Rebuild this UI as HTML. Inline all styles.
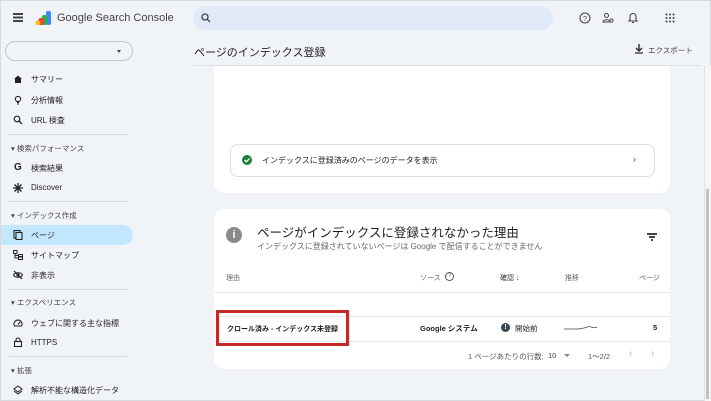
<!DOCTYPE html>
<html><head><meta charset="utf-8"><style>
*{box-sizing:border-box;margin:0;padding:0}
body{width:711px;height:401px;overflow:hidden;background:#f0f4f9;font-family:"Liberation Sans","Noto Sans CJK JP",sans-serif;color:#1f1f1f;position:relative;border:1px solid #d6d9dd}
.a{position:absolute;white-space:nowrap}
.side{font-size:8px;color:#1f1f1f}
.sec{font-size:7.5px;color:#444}
.hr{position:absolute;left:8px;width:118px;height:1px;background:#d3d6da}
svg.i{position:absolute;width:10px;height:10px}
</style></head><body>
<!-- header -->
<div class="a" style="left:12px;top:12px;width:10px;height:1.5px;background:#444;box-shadow:0 3.5px 0 #444,0 7px 0 #444"></div>
<svg class="a" style="left:34px;top:10px" width="17" height="14" viewBox="0 0 17 14"><rect x="11" y="0" width="5" height="14" rx="2" fill="#4285f4"/><rect x="7" y="4" width="5" height="10" rx="2" fill="#34a853"/><rect x="3.5" y="7" width="5" height="7" rx="2" fill="#ea4335"/><circle cx="3" cy="12" r="2.5" fill="#fbbc04"/></svg>
<div class="a" style="left:56px;top:11px;font-size:11px;color:#444">Google Search Console</div>
<div class="a" style="left:192px;top:5px;width:360px;height:24px;border-radius:12px;background:#e0e9f8"></div>
<svg class="a" style="left:200px;top:12px" width="10" height="10" viewBox="0 0 10 10"><circle cx="4" cy="4" r="3" fill="none" stroke="#444" stroke-width="1.3"/><path d="M6.2 6.2L9 9" stroke="#444" stroke-width="1.3"/></svg>
<svg class="a" style="left:578px;top:11px" width="12" height="12" viewBox="0 0 12 12"><circle cx="6" cy="6" r="5" fill="none" stroke="#444" stroke-width="1.1"/><text x="6" y="8.8" font-size="7.5" text-anchor="middle" fill="#444" font-family="Liberation Sans">?</text></svg>
<svg class="a" style="left:601px;top:11px" width="12" height="12" viewBox="0 0 12 12"><circle cx="4.5" cy="3.5" r="2" fill="none" stroke="#444" stroke-width="1"/><path d="M1 10c0-3 7-3 7 0z" fill="none" stroke="#444" stroke-width="1"/><circle cx="9.5" cy="8.5" r="1.6" fill="none" stroke="#444" stroke-width="1"/></svg>
<svg class="a" style="left:626px;top:10px" width="12" height="13" viewBox="0 0 12 13"><path d="M3 9V5.5a3 3 0 016 0V9l1 1H2z" fill="none" stroke="#444" stroke-width="1.1"/><path d="M5 11.5h2" stroke="#444" stroke-width="1.1"/></svg>
<svg class="a" style="left:664px;top:12px" width="10" height="10" viewBox="0 0 10 10" fill="#444"><circle cx="1.5" cy="1.5" r="1"/><circle cx="5" cy="1.5" r="1"/><circle cx="8.5" cy="1.5" r="1"/><circle cx="1.5" cy="5" r="1"/><circle cx="5" cy="5" r="1"/><circle cx="8.5" cy="5" r="1"/><circle cx="1.5" cy="8.5" r="1"/><circle cx="5" cy="8.5" r="1"/><circle cx="8.5" cy="8.5" r="1"/></svg>
<!-- sidebar -->
<div class="a" style="left:4px;top:40px;width:128px;height:20px;border:1px solid #c4c7c5;border-radius:10px"></div>
<div class="a" style="left:116px;top:49px;border:2.5px solid transparent;border-top:3px solid #444"></div>
<div class="a" style="left:0;top:224px;width:132px;height:20px;background:#c2e7ff;border-radius:0 10px 10px 0"></div>
<svg class="i" style="left:12px;top:73px" viewBox="0 0 10 10"><path d="M1 5L5 1.5 9 5H8v4H2V5z" fill="#222"/></svg>
<div class="a side" style="left:30px;top:73px">サマリー</div>
<svg class="i" style="left:12px;top:94px" viewBox="0 0 10 10"><circle cx="5" cy="4" r="2.6" fill="none" stroke="#222" stroke-width="1.1"/><path d="M4 7.5h2M4 9h2" stroke="#222" stroke-width="1"/></svg>
<div class="a side" style="left:30px;top:94px">分析情報</div>
<svg class="i" style="left:12px;top:114px" viewBox="0 0 10 10"><circle cx="4" cy="4" r="2.8" fill="none" stroke="#222" stroke-width="1.2"/><path d="M6 6L9 9" stroke="#222" stroke-width="1.3"/></svg>
<div class="a side" style="left:30px;top:114px">URL 検査</div>
<div class="hr" style="top:133px"></div>
<div class="a sec" style="left:10px;top:142px">▾ 検索パフォーマンス</div>
<div class="a side" style="left:13px;top:161px;font-weight:bold;font-size:10px">G</div>
<div class="a side" style="left:30px;top:162px">検索結果</div>
<svg class="i" style="left:12px;top:182px" viewBox="0 0 10 10"><path d="M5 0v10M0 5h10M1.5 1.5l7 7M8.5 1.5l-7 7" stroke="#222" stroke-width="1.3"/></svg>
<div class="a side" style="left:30px;top:182px">Discover</div>
<div class="hr" style="top:200px"></div>
<div class="a sec" style="left:10px;top:209px">▾ インデックス作成</div>
<svg class="i" style="left:12px;top:229px" viewBox="0 0 10 10"><rect x="1" y="0.5" width="6" height="7.5" fill="none" stroke="#222" stroke-width="1.1"/><rect x="3" y="2.5" width="6" height="7" fill="#c2e7ff" stroke="#222" stroke-width="1.1"/></svg>
<div class="a side" style="left:30px;top:229px">ページ</div>
<svg class="i" style="left:12px;top:249px" viewBox="0 0 10 10"><rect x="0.5" y="0.5" width="3.5" height="3" fill="none" stroke="#222"/><path d="M2 3.5V8h3M2 5.5h3" stroke="#222" fill="none"/><rect x="5.5" y="4.5" width="4" height="2" fill="none" stroke="#222"/><rect x="5.5" y="7" width="4" height="2.5" fill="none" stroke="#222"/></svg>
<div class="a side" style="left:30px;top:249px">サイトマップ</div>
<svg class="i" style="left:12px;top:269px" viewBox="0 0 10 10"><path d="M0.5 5C2 2 8 2 9.5 5C8 8 2 8 .5 5z" fill="none" stroke="#222" stroke-width="1.1"/><circle cx="5" cy="5" r="1.6" fill="#222"/><path d="M1 1l8 8" stroke="#222" stroke-width="1.2"/></svg>
<div class="a side" style="left:30px;top:269px">非表示</div>
<div class="hr" style="top:288px"></div>
<div class="a sec" style="left:10px;top:296px">▾ エクスペリエンス</div>
<svg class="i" style="left:12px;top:317px" viewBox="0 0 10 10"><path d="M1.5 8A4 4 0 118.5 8z" fill="none" stroke="#222" stroke-width="1.1"/><path d="M5 6.5L7 4" stroke="#222" stroke-width="1.1"/></svg>
<div class="a side" style="left:30px;top:317px">ウェブに関する主な指標</div>
<svg class="i" style="left:12px;top:336px" viewBox="0 0 10 10"><rect x="1.5" y="4.5" width="7" height="5" fill="none" stroke="#222" stroke-width="1.1"/><path d="M3 4.5V3a2 2 0 014 0v1.5" fill="none" stroke="#222" stroke-width="1.1"/></svg>
<div class="a side" style="left:30px;top:337px">HTTPS</div>
<div class="hr" style="top:355px"></div>
<div class="a sec" style="left:10px;top:364px">▾ 拡張</div>
<svg class="i" style="left:12px;top:384px" viewBox="0 0 10 10"><path d="M5 1L9 4 5 7 1 4z" fill="none" stroke="#222" stroke-width="1"/><path d="M1 6l4 3 4-3" fill="none" stroke="#222" stroke-width="1"/></svg>
<div class="a side" style="left:30px;top:384px">解析不能な構造化データ</div>
<!-- title bar -->
<div class="a" style="left:193px;top:43px;font-size:11px;color:#1f1f1f">ページのインデックス登録</div>
<svg class="a" style="left:634px;top:43px" width="8" height="10" viewBox="0 0 8 10"><path d="M4 0v6M1 4l3 3 3-3" stroke="#333" stroke-width="1.5" fill="none"/><path d="M0 9h8" stroke="#333" stroke-width="1.3"/></svg>
<div class="a" style="left:647px;top:44px;font-size:7.5px;color:#444">エクスポート</div>
<div class="a" style="left:192px;top:64px;width:508px;height:1px;background:#dde1e6"></div>
<!-- card 1 -->
<div class="a" style="left:213px;top:65px;width:456px;height:127px;background:#fff;border-radius:0 0 10px 10px"></div>
<div class="a" style="left:229px;top:143px;width:425px;height:33px;border:1px solid #dadce0;border-radius:8px"></div>
<svg class="a" style="left:241px;top:154px" width="10" height="10" viewBox="0 0 10 10"><circle cx="5" cy="5" r="5" fill="#188038"/><path d="M2.5 5l1.8 1.8L7.5 3.5" stroke="#fff" stroke-width="1.3" fill="none"/></svg>
<div class="a" style="left:261px;top:154px;font-size:8px">インデックスに登録済みのページのデータを表示</div>
<div class="a" style="left:632px;top:153px;font-size:9px;color:#444">›</div>
<!-- card 2 -->
<div class="a" style="left:213px;top:208px;width:456px;height:160px;background:#fff;border-radius:10px"></div>
<div class="a" style="left:225px;top:226px;width:16px;height:16px;border-radius:50%;background:#8a8a8a;color:#fff;font-size:11px;font-weight:bold;text-align:center;line-height:16px">i</div>
<div class="a" style="left:256px;top:221px;font-size:12.5px">ページがインデックスに登録されなかった理由</div>
<div class="a" style="left:256px;top:240px;font-size:8px;color:#666">インデックスに登録されていないページは Google で配信することができません</div>
<div class="a" style="left:646px;top:232px;width:10px;height:1.5px;background:#444"></div>
<div class="a" style="left:648px;top:235px;width:6px;height:1.5px;background:#444"></div>
<div class="a" style="left:650px;top:238px;width:2px;height:1.5px;background:#444"></div>
<div class="a" style="left:225px;top:272px;font-size:7px;color:#666">理由</div>
<div class="a" style="left:419px;top:272px;font-size:7px;color:#666">ソース</div>
<div class="a" style="left:444px;top:271px;width:9px;height:9px;border:1px solid #555;border-radius:50%;font-size:6px;text-align:center;line-height:7px;color:#555">?</div>
<div class="a" style="left:499px;top:272px;font-size:7px;color:#333">確認 ↓</div>
<div class="a" style="left:564px;top:272px;font-size:7px;color:#666">推移</div>
<div class="a" style="left:638px;top:272px;font-size:7px;color:#666">ページ</div>
<div class="a" style="left:213px;top:291px;width:456px;height:1px;background:#e8eaed"></div>
<div class="a" style="left:213px;top:315px;width:456px;height:1px;background:#e8eaed"></div>
<div class="a" style="left:213px;top:340px;width:456px;height:1px;background:#e8eaed"></div>
<div class="a" style="left:226px;top:323px;font-size:7px;font-weight:bold">クロール済み - インデックス未登録</div>
<div class="a" style="left:419px;top:322px;font-size:7.5px;font-weight:bold">Google システム</div>
<div class="a" style="left:500px;top:322px;width:9px;height:9px;border-radius:50%;background:#37474f;color:#fff;font-size:7px;font-weight:bold;text-align:center;line-height:9px">!</div>
<div class="a" style="left:514px;top:322px;font-size:7.5px">開始前</div>
<svg class="a" style="left:563px;top:322px" width="35" height="8" viewBox="0 0 35 8"><path d="M0 6H14L20 5L25 3.5L29 4.5H33" stroke="#444" stroke-width=".8" fill="none"/></svg>
<div class="a" style="left:652px;top:322px;font-size:7.5px;font-weight:bold">5</div>
<div class="a" style="left:467px;top:350px;font-size:7.5px;color:#555">1 ページあたりの行数:</div>
<div class="a" style="left:547px;top:350px;font-size:7.5px;color:#444">10</div>
<div class="a" style="left:563px;top:353px;border:3px solid transparent;border-top:3.5px solid #888"></div>
<div class="a" style="left:587px;top:350px;font-size:7.5px;color:#555">1～2/2</div>
<div class="a" style="left:628px;top:347px;font-size:10px;color:#aaa">‹</div>
<div class="a" style="left:650px;top:347px;font-size:10px;color:#aaa">›</div>
<!-- red box -->
<div class="a" style="left:215px;top:309px;width:133px;height:36px;border:3px solid #c62828"></div>
<!-- scrollbar -->
<div class="a" style="left:703px;top:65px;width:7px;height:335px;background:#f5f5f5;border-left:1px solid #e2e2e2"></div>
<div class="a" style="left:705px;top:188px;width:3px;height:210px;background:#c1c1c1"></div>
</body></html>
